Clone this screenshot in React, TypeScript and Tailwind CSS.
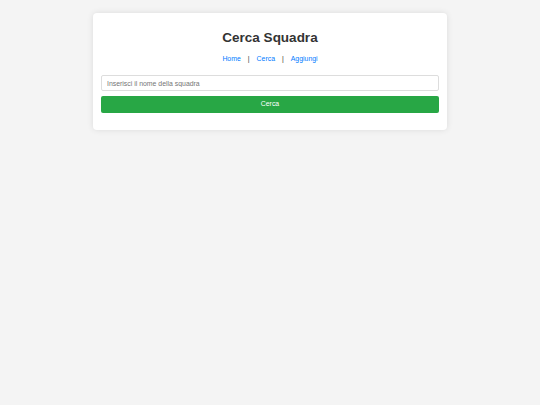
export default function App() {
  return (
    <div
      className="min-h-[405px] w-full bg-[#f4f4f4] pt-[13px]"
      style={{ fontFamily: 'Arial, "Liberation Sans", sans-serif' }}
    >
      <div className="mx-auto w-[354px] rounded-[4px] bg-white px-[8px] pt-[17px] pb-[17px] shadow-[0_0_6px_rgba(0,0,0,0.1)]">
        <h1 className="h-[16px] text-center text-[13.5px] leading-[16px] font-bold text-[#333]">Cerca Squadra</h1>
        <nav className="mt-[9px] flex h-[8px] items-center justify-center text-[6.9px] leading-[8px]">
          <a className="text-[#007bff]">Home</a>
          <span className="mx-[7px] text-[#333]">|</span>
          <a className="text-[#007bff]">Cerca</a>
          <span className="mx-[7px] text-[#333]">|</span>
          <a className="text-[#007bff]">Aggiungi</a>
        </nav>
        <form className="mt-[12px] flex flex-col gap-[5px]" onSubmit={e => e.preventDefault()}>
          <input
            type="text"
            placeholder="Inserisci il nome della squadra"
            className="h-[16px] w-full rounded-[2px] border border-[#ddd] px-[5px] text-[6.9px] text-[#333] outline-none placeholder:text-[#757575]"
          />
          <button
            type="submit"
            className="h-[17px] w-full rounded-[2px] bg-[#28a745] text-[6.9px] text-white"
          >
            Cerca
          </button>
        </form>
      </div>
    </div>
  )
}
